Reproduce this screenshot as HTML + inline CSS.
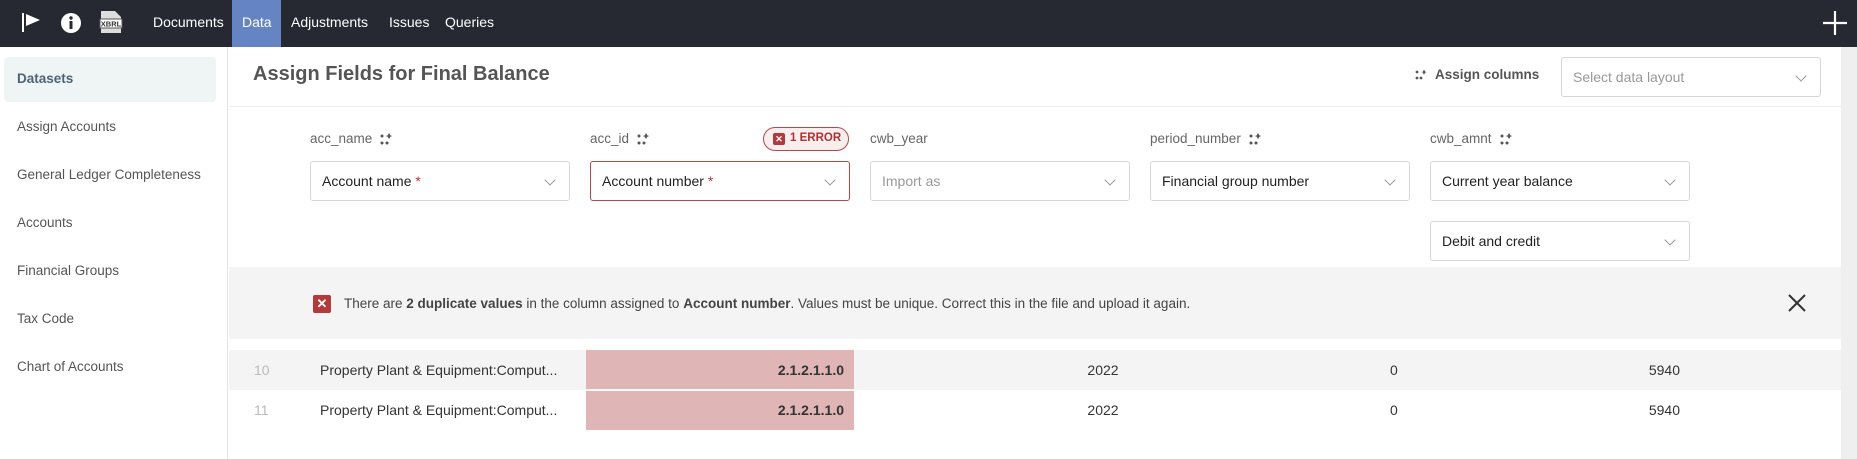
<!DOCTYPE html>
<html><head><meta charset="utf-8"><style>
*{box-sizing:border-box;margin:0;padding:0}
body{width:1857px;height:459px;overflow:hidden;font-family:"Liberation Sans",sans-serif;background:#fff;position:relative;color:#333}
.abs{position:absolute}
.nav{left:0;top:0;width:1857px;height:47px;background:#262932}
.nl{top:0;height:47px;line-height:44px;color:#fff;font-size:14px}
.side{left:0;top:47px;width:228px;height:412px;border-right:1px solid #e3e3e3}
.si{left:17px;font-size:13.5px;color:#555}
.lbl{font-size:13.5px;color:#666;top:131px}
.sel{height:40px;border:1px solid #d6d6d6;border-radius:3px;background:#fff;font-size:14px;color:#222;padding-left:11px;line-height:38px}
.sel:after{content:"";position:absolute;right:15px;top:14px;width:7px;height:7px;border-right:1.3px solid #999;border-bottom:1.3px solid #999;transform:rotate(45deg)}
.dots{display:inline-block;width:12px;height:12px;vertical-align:middle;margin-left:8px}
.cell{font-size:14px;color:#333;line-height:40px}
</style></head><body>
<div class="abs nav"></div>
<svg class="abs" style="left:22px;top:13px" width="22" height="20"><rect x="0" y="0" width="2" height="19" fill="#fff"/><path d="M4 1 L18 7 L4 13 Z" fill="#fff"/></svg>
<svg class="abs" style="left:60px;top:12px" width="22" height="22"><circle cx="11" cy="11" r="10" fill="#fff"/><rect x="9.5" y="9" width="3" height="8" fill="#262932"/><circle cx="11" cy="6" r="1.7" fill="#262932"/></svg>
<svg class="abs" style="left:99px;top:9px" width="24" height="26"><path d="M2 2 H16 L22 8 V24 H2 Z" fill="#ddd"/><rect x="1" y="10" width="22" height="9" fill="#fff" stroke="#555" stroke-width="1"/><text x="12" y="17.5" font-size="7.5" font-weight="bold" text-anchor="middle" fill="#333" font-family="Liberation Sans">XBRL</text></svg>
<div class="abs nl" style="left:153px">Documents</div>
<div class="abs" style="left:232px;top:0;width:49px;height:47px;background:#6584c4"></div>
<div class="abs nl" style="left:242px">Data</div>
<div class="abs nl" style="left:291px">Adjustments</div>
<div class="abs nl" style="left:389px">Issues</div>
<div class="abs nl" style="left:445px">Queries</div>
<svg class="abs" style="left:1822px;top:10px" width="26" height="26"><path d="M13 1V25M1 13H25" stroke="#fff" stroke-width="2.2"/></svg>

<div class="abs side"></div>
<div class="abs" style="left:4px;top:57px;width:212px;height:45px;background:#eff4f4;border-radius:4px"></div>
<div class="abs si" style="top:71px;color:#4d6377;font-weight:bold">Datasets</div>
<div class="abs si" style="top:119px">Assign Accounts</div>
<div class="abs si" style="top:167px">General Ledger Completeness</div>
<div class="abs si" style="top:215px">Accounts</div>
<div class="abs si" style="top:263px">Financial Groups</div>
<div class="abs si" style="top:311px">Tax Code</div>
<div class="abs si" style="top:359px">Chart of Accounts</div>

<div class="abs" style="left:1841px;top:47px;width:16px;height:412px;background:#efefef"></div>

<div class="abs" style="left:253px;top:63px;font-size:20px;font-weight:bold;color:#555">Assign Fields for Final Balance</div>
<div class="abs" style="left:229px;top:106px;width:1612px;height:1px;background:#eee"></div>
<div class="abs" style="left:1415px;top:67px;font-size:13.5px;font-weight:bold;color:#555"><svg width="12" height="12" style="vertical-align:middle;margin-right:8px"><g fill="#555"><circle cx="2" cy="3" r="1.4"/><circle cx="2" cy="9" r="1.4"/><circle cx="6" cy="9" r="1.4"/><path d="M9 0.5L10.3 2.7L12 3L10.3 3.5L9 5.7L7.8 3.5L6 3L7.8 2.7Z"/></g></svg>Assign columns</div>
<div class="abs sel" style="left:1561px;top:57px;width:260px;color:#999">Select data layout</div>

<svg width="0" height="0" style="position:absolute"><defs><g id="d" fill="#555"><circle cx="2" cy="3" r="1.5"/><circle cx="2" cy="10" r="1.5"/><circle cx="7" cy="10" r="1.5"/><path d="M9 0L10.5 2.5L12.5 3L10.5 3.6L9 6L7.6 3.6L5.5 3L7.6 2.5Z"/></g></defs></svg>
<div class="abs lbl" style="left:310px">acc_name<svg class="dots"><use href="#d"/></svg></div>
<div class="abs lbl" style="left:590px">acc_id<svg class="dots"><use href="#d"/></svg></div>
<div class="abs" style="left:763px;top:127px;width:86px;height:24px;border:1.5px solid #b84848;border-radius:12px;background:#f9eeee;font-size:11.5px;font-weight:bold;color:#a33;line-height:21px;padding-left:9px;white-space:nowrap"><span style="display:inline-block;width:12px;height:12px;background:#b33a3a;color:#fff;font-size:9px;line-height:12px;text-align:center;border-radius:2px;vertical-align:-1px;margin-right:5px">✕</span>1 ERROR</div>
<div class="abs lbl" style="left:870px">cwb_year</div>
<div class="abs lbl" style="left:1150px">period_number<svg class="dots"><use href="#d"/></svg></div>
<div class="abs lbl" style="left:1430px">cwb_amnt<svg class="dots"><use href="#d"/></svg></div>

<div class="abs sel" style="left:310px;top:161px;width:260px">Account name <span style="color:#b33">*</span></div>
<div class="abs sel" style="left:590px;top:161px;width:260px;border-color:#b84848">Account number <span style="color:#b33">*</span></div>
<div class="abs sel" style="left:870px;top:161px;width:260px;color:#999">Import as</div>
<div class="abs sel" style="left:1150px;top:161px;width:260px">Financial group number</div>
<div class="abs sel" style="left:1430px;top:161px;width:260px">Current year balance</div>
<div class="abs sel" style="left:1430px;top:221px;width:260px">Debit and credit</div>

<div class="abs" style="left:229px;top:267px;width:1612px;height:72px;background:#f4f4f4"></div>
<div class="abs" style="left:313px;top:295px;width:18px;height:18px;background:#b33a3a;border-radius:2px;color:#fff;font-size:13px;text-align:center;line-height:18px;font-weight:bold">✕</div>
<div class="abs" style="left:344px;top:295px;font-size:13.5px;color:#444;line-height:18px">There are <b>2 duplicate values</b> in the column assigned to <b>Account number</b>. Values must be unique. Correct this in the file and upload it again.</div>
<svg class="abs" style="left:1788px;top:294px" width="18" height="18"><path d="M1 1L17 17M17 1L1 17" stroke="#333" stroke-width="2"/></svg>

<div class="abs" style="left:229px;top:350px;width:1612px;height:40px;background:#f4f4f4"></div>
<div class="abs" style="left:586px;top:350px;width:268px;height:39px;background:#dfb5b5"></div>
<div class="abs" style="left:586px;top:391px;width:268px;height:39px;background:#dfb5b5"></div>
<div class="abs cell" style="left:254px;top:350px;color:#bbb">10</div>
<div class="abs cell" style="left:320px;top:350px">Property Plant &amp; Equipment:Comput...</div>
<div class="abs cell" style="left:586px;top:350px;width:258px;text-align:right;font-weight:bold">2.1.2.1.1.0</div>
<div class="abs cell" style="left:1080px;top:350px;width:46px;text-align:center">2022</div>
<div class="abs cell" style="left:1390px;top:350px">0</div>
<div class="abs cell" style="left:1600px;top:350px;width:80px;text-align:right">5940</div>
<div class="abs cell" style="left:254px;top:390px;color:#bbb">11</div>
<div class="abs cell" style="left:320px;top:390px">Property Plant &amp; Equipment:Comput...</div>
<div class="abs cell" style="left:586px;top:390px;width:258px;text-align:right;font-weight:bold">2.1.2.1.1.0</div>
<div class="abs cell" style="left:1080px;top:390px;width:46px;text-align:center">2022</div>
<div class="abs cell" style="left:1390px;top:390px">0</div>
<div class="abs cell" style="left:1600px;top:390px;width:80px;text-align:right">5940</div>
</body></html>
